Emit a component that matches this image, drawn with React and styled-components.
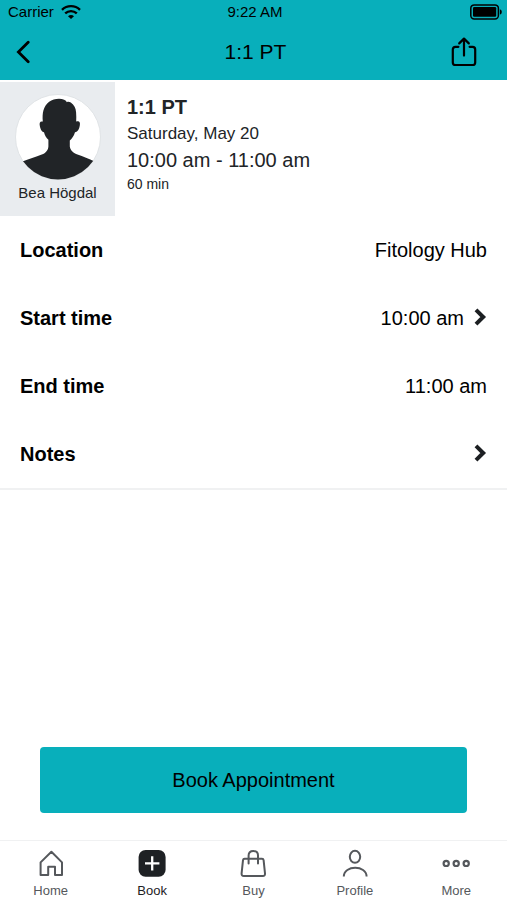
import React from 'react'
import styled, { createGlobalStyle } from 'styled-components'

const GlobalStyle = createGlobalStyle`
  body {
    margin: 0;
    background: #ffffff;
    font-family: "Liberation Sans", Arial, sans-serif;
    color: #000000;
  }

  *, *::before, *::after {
    box-sizing: border-box;
  }
`

const WifiIcon = () => (
  <svg width="20" height="16" viewBox="0 0 20 16" fill="none" stroke="#000" strokeWidth="2.4">
    <path d="M1 5.8C6 0.9 14 0.9 19 5.8" />
    <path d="M4.2 9.4C7.5 6.3 12.5 6.3 15.8 9.4" />
    <path d="M10 15L7 12.2C8.7 10.6 11.3 10.6 13 12.2Z" fill="#000" stroke="none" />
  </svg>
)

const BatteryIcon = () => (
  <svg width="32" height="16" viewBox="0 0 32 16">
    <rect x="0.8" y="0.9" width="27.6" height="14" rx="3.4" fill="none" stroke="#000" strokeWidth="1.5" />
    <rect x="3" y="3.1" width="23.2" height="9.6" rx="1.2" fill="#000" />
    <path d="M29.9 5.2C32.4 6 32.4 9.8 29.9 10.6Z" fill="#000" />
  </svg>
)

const BackIcon = () => (
  <svg width="14" height="24" viewBox="0 0 14 24" fill="none" stroke="#000" strokeWidth="2.8">
    <path d="M12.2 2.2L2.4 12L12.2 21.8" strokeLinecap="round" strokeLinejoin="miter" />
  </svg>
)

const ShareIcon = () => (
  <svg width="26" height="30" viewBox="0 0 26 30" fill="none" stroke="#000" strokeWidth="2.2" strokeLinecap="round" strokeLinejoin="round">
    <path d="M7.4 9.8H4.4Q1.8 9.8 1.8 12.4V25.4Q1.8 28 4.4 28H21.6Q24.2 28 24.2 25.4V12.4Q24.2 9.8 21.6 9.8H18.6" />
    <path d="M13 18.6V2M8.2 6.4L13 1.6L17.8 6.4" />
  </svg>
)

const ChevronIcon = () => (
  <svg width="13" height="20" viewBox="0 0 13 20" fill="none" stroke="#1c1f22" strokeWidth="4">
    <path d="M2 1.8L9.2 9L2 16.2" />
  </svg>
)

const Silhouette = () => (
  <svg width="86" height="86" viewBox="0 0 86 86" role="img" aria-label="Bea Högdal">
    <defs>
      <clipPath id="avatar-circle">
        <circle cx="43" cy="43" r="42.5" />
      </clipPath>
    </defs>
    <circle cx="43" cy="43" r="42.5" fill="#fff" stroke="#dcdfe2" strokeWidth="0.8" />
    <path
      clipPath="url(#avatar-circle)"
      fill="#212427"
      d="M27.8 27.6C27.4 23 27.6 19.5 28.4 16.5C30.4 9 36.6 4.8 44 4.7C48 4.7 51 6 51.9 8.2C52.8 7.4 54.4 7.6 55.8 8.6C59.2 11 60.8 14 61.1 18.4C61.3 21.4 61.4 24.4 61.2 27.6C64.6 26.6 65.4 28.6 64.8 31.6C64.2 35 63 38 60 38.2C58.8 42.2 57 44.4 54.8 46.4V52.4C55.4 56.6 58.6 58.8 62.5 60.6C68 62.8 74 64.8 79.6 67.4V86H7.4V67.4C13.4 65.2 21 63 26.8 60.6C31 58.6 33 56.4 33.4 52.4V45.8C31.2 43.6 29.8 41.4 29 38.2C26.4 37.8 25.4 35 24.8 31.8C24.2 28.6 25 27 27.8 27.6Z"
    />
  </svg>
)

const HomeIcon = () => (
  <svg width="28" height="28" viewBox="0 0 28 28" fill="none" stroke="currentColor" strokeWidth="2" strokeLinejoin="round">
    <path d="M3.6 13.4L14.4 2.8L25 13.4V26H18V17.8H11.2V26H3.6Z" />
  </svg>
)

const BookIcon = () => (
  <svg width="28" height="28" viewBox="0 0 28 28">
    <rect x="0.6" y="1" width="27" height="26.8" rx="7" fill="#1e2124" />
    <path d="M14.2 7.2V21.6M7 14.4H21.4" stroke="#fff" strokeWidth="2.3" />
  </svg>
)

const BagIcon = () => (
  <svg width="28" height="28" viewBox="0 0 28 28" fill="none" stroke="currentColor" strokeWidth="2" strokeLinecap="round" strokeLinejoin="round">
    <path d="M5.6 9.8H23Q24.4 9.8 24.6 11.2L26 24.4Q26.2 27 23.8 27H4.8Q2.4 27 2.6 24.4L4 11.2Q4.2 9.8 5.6 9.8Z" />
    <path d="M9.6 14.6V6.6Q9.6 2 14.3 2Q19 2 19 6.6V14.6" />
  </svg>
)

const ProfileIcon = () => (
  <svg width="28" height="28" viewBox="0 0 28 28" fill="none" stroke="currentColor" strokeWidth="2">
    <ellipse cx="14" cy="7.8" rx="5.2" ry="6" />
    <path d="M2.8 27.6C2.8 15.8 25.6 15.8 25.6 27.6" />
  </svg>
)

const MoreIcon = () => (
  <svg width="28" height="28" viewBox="0 0 28 28" fill="none" stroke="currentColor" strokeWidth="2.2">
    <circle cx="4.2" cy="14.4" r="2.6" />
    <circle cx="14.2" cy="14.4" r="2.6" />
    <circle cx="24.2" cy="14.4" r="2.6" />
  </svg>
)

const tabs = [
  { label: 'Home', Icon: HomeIcon },
  { label: 'Book', Icon: BookIcon, active: true },
  { label: 'Buy', Icon: BagIcon },
  { label: 'Profile', Icon: ProfileIcon },
  { label: 'More', Icon: MoreIcon },
]

const App = () => {
  return (
    <Page>
      <GlobalStyle />
      <Header>
        <StatusBar>
          <Carrier>
            Carrier
            <WifiIcon />
          </Carrier>
          <span>9:22 AM</span>
          <Battery>
            <BatteryIcon />
          </Battery>
        </StatusBar>
        <NavBar>
          <IconButton type="button" aria-label="Back">
            <BackIcon />
          </IconButton>
          <NavTitle>1:1 PT</NavTitle>
          <IconButton type="button" aria-label="Share" $end>
            <ShareIcon />
          </IconButton>
        </NavBar>
      </Header>

      <Summary>
        <Trainer>
          <Silhouette />
          <TrainerName>Bea Högdal</TrainerName>
        </Trainer>
        <SummaryText>
          <SessionName>1:1 PT</SessionName>
          <SessionDate>Saturday, May 20</SessionDate>
          <SessionTime>10:00 am - 11:00 am</SessionTime>
          <Duration>60 min</Duration>
        </SummaryText>
      </Summary>

      <Details>
        <Row>
          <Label>Location</Label>
          <Value>Fitology Hub</Value>
        </Row>
        <Row as="button" type="button">
          <Label>Start time</Label>
          <Value>
            10:00 am
            <ChevronIcon />
          </Value>
        </Row>
        <Row>
          <Label>End time</Label>
          <Value>11:00 am</Value>
        </Row>
        <Row as="button" type="button">
          <Label>Notes</Label>
          <Value>
            <ChevronIcon />
          </Value>
        </Row>
      </Details>

      <Actions>
        <BookButton type="button">Book Appointment</BookButton>
      </Actions>

      <TabBar>
        {tabs.map(({ label, Icon, active }) => (
          <Tab href="#" key={label} $active={active}>
            <Icon />
            {label}
          </Tab>
        ))}
      </TabBar>
    </Page>
  )
}

export default App

const Page = styled.div`
  display: flex;
  flex-direction: column;
  min-height: 100vh;
`

const Header = styled.header`
  background: #08afbb;
`

const StatusBar = styled.div`
  display: grid;
  grid-template-columns: 1fr auto 1fr;
  align-items: center;
  height: 24px;
  padding: 0 5px 0 8px;
  font-size: 15px;
  line-height: 24px;
`

const Carrier = styled.div`
  display: flex;
  align-items: center;
  gap: 7px;
`

const Battery = styled.div`
  display: flex;
  justify-content: flex-end;
`

const NavBar = styled.nav`
  display: grid;
  grid-template-columns: 1fr auto 1fr;
  align-items: center;
  height: 56px;
  padding: 0 12px 0 16px;
`

const NavTitle = styled.h1`
  margin: 0;
  font-size: 21px;
  font-weight: 400;
  line-height: 28px;
`

const IconButton = styled.button`
  display: flex;
  justify-self: ${({ $end }) => ($end ? 'end' : 'start')};
  padding: ${({ $end }) => ($end ? '0 18px 0 0' : '0')};
  border: 0;
  background: none;
  color: inherit;
  cursor: pointer;
`

const Summary = styled.section`
  display: flex;
  margin-top: 2px;
  color: #212427;
`

const Trainer = styled.div`
  display: flex;
  flex-direction: column;
  align-items: center;
  width: 115px;
  height: 134px;
  padding-top: 12px;
  background: #e9ecef;
`

const TrainerName = styled.div`
  margin-top: 3px;
  font-size: 15px;
  line-height: 20px;
`

const SummaryText = styled.div`
  display: flex;
  flex-direction: column;
  padding: 11px 12px;
`

const SessionName = styled.h2`
  margin: 0;
  font-size: 20px;
  line-height: 28px;
`

const SessionDate = styled.div`
  font-size: 17px;
  line-height: 26px;
`

const SessionTime = styled.div`
  font-size: 20px;
  line-height: 26px;
`

const Duration = styled.div`
  font-size: 14px;
  line-height: 22px;
`

const Details = styled.section`
  border-bottom: 2px solid #f0f1f2;
`

const Row = styled.div`
  display: flex;
  align-items: center;
  justify-content: space-between;
  width: 100%;
  height: 68px;
  padding: 0 20px;
  border: 0;
  background: none;
  color: inherit;
  font-family: inherit;
  font-size: 20px;
  line-height: 28px;
`

const Label = styled.span`
  font-weight: 700;
`

const Value = styled.span`
  display: flex;
  align-items: center;
  gap: 10px;
`

const Actions = styled.div`
  margin-top: auto;
  padding: 27px 40px;
`

const BookButton = styled.button`
  display: block;
  width: 100%;
  height: 66px;
  padding: 0;
  border: 0;
  border-radius: 4px;
  background: #08afbb;
  color: #000000;
  font-family: inherit;
  font-size: 20px;
  cursor: pointer;
`

const TabBar = styled.nav`
  display: grid;
  grid-template-columns: repeat(5, 1fr);
  height: 60px;
  border-top: 1px solid #f0f1f2;
`

const Tab = styled.a`
  display: flex;
  flex-direction: column;
  align-items: center;
  gap: 4px;
  padding-top: 8px;
  color: ${({ $active }) => ($active ? '#1e2124' : '#55585c')};
  font-size: 13px;
  line-height: 20px;
  text-decoration: none;
`
